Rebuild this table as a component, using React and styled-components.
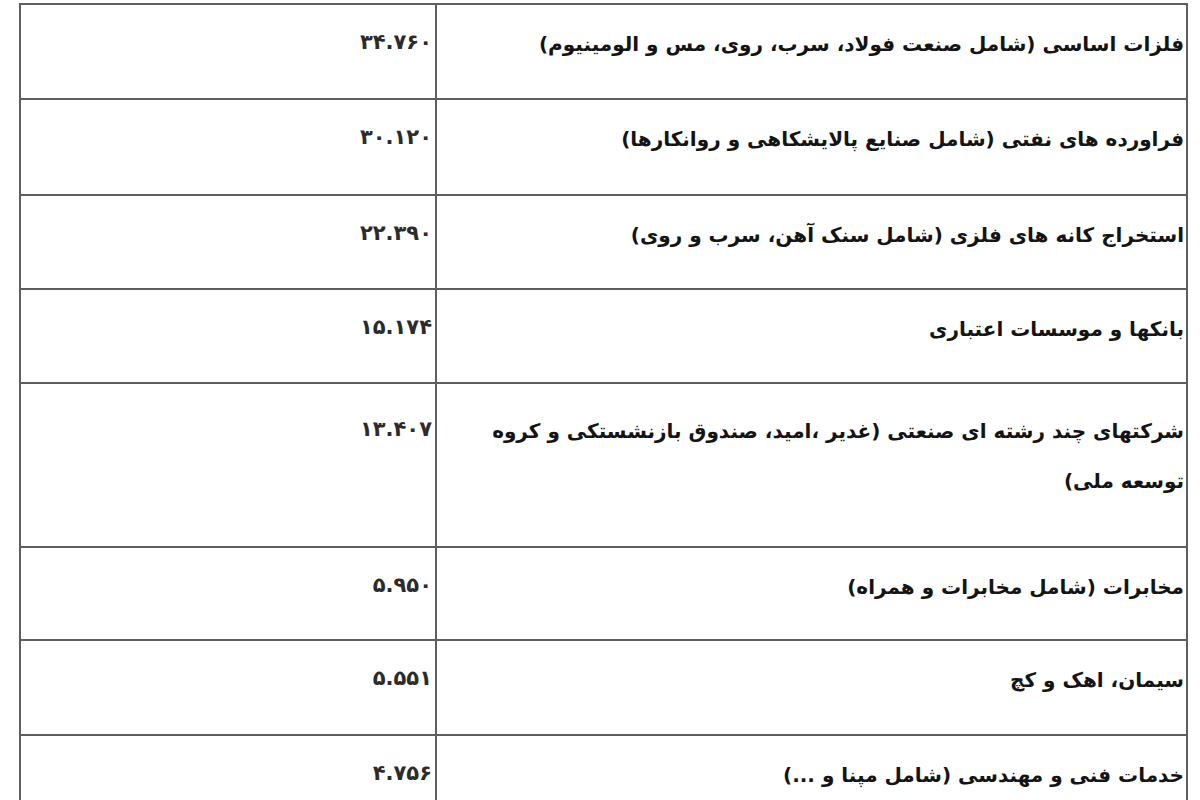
import React from 'react';
import styled, { createGlobalStyle } from 'styled-components';

const GlobalStyle = createGlobalStyle`
  html, body {
    margin: 0;
    padding: 0;
    background: #fff;
  }
`;

const Page = styled.div`
  width: 1200px;
  height: 800px;
  overflow: hidden;
  padding: 3px 0 0 19px;
  box-sizing: border-box;
`;

const Table = styled.div`
  width: 1169px;
  direction: rtl;
  border: 2px solid #5e5e5e;
  border-bottom: none;
  box-sizing: border-box;
  font-family: "DejaVu Sans", "Noto Sans", sans-serif;
`;

const Row = styled.div`
  display: grid;
  grid-template-columns: 751px 414px;
  height: ${(p) => p.$h}px;
  border-bottom: 2px solid #5e5e5e;
  box-sizing: border-box;
`;

const LabelCell = styled.div`
  border-left: 2px solid #5e5e5e;
  padding: ${(p) => p.$top}px 2px 0 0;
  font-size: 20px;
  line-height: 50px;
  font-weight: bold;
  color: #141414;
  text-align: right;
`;

const ValueCell = styled.div`
  padding: ${(p) => p.$top - 2}px 3px 0 0;
  font-size: 21px;
  line-height: 50px;
  font-weight: bold;
  letter-spacing: 1px;
  color: #2b2b2b;
  text-align: right;
`;

const rows = [
  { label: 'فلزات اساسی (شامل صنعت فولاد، سرب، روی، مس و الومینیوم)', value: '۳۴.۷۶۰', h: 95 },
  { label: 'فراورده های نفتی (شامل صنایع پالایشکاهی و روانکارها)', value: '۳۰.۱۲۰', h: 96 },
  { label: 'استخراج کانه های فلزی (شامل سنک آهن، سرب و روی)', value: '۲۲.۳۹۰', h: 94 },
  { label: 'بانکها و موسسات اعتباری', value: '۱۵.۱۷۴', h: 94 },
  {
    label: 'شرکتهای چند رشته ای صنعتی (غدیر ،امید، صندوق بازنشستکی و کروه توسعه ملی)',
    value: '۱۳.۴۰۷',
    h: 164,
    top: 22,
  },
  { label: 'مخابرات (شامل مخابرات و همراه)', value: '۵.۹۵۰', h: 93 },
  { label: 'سیمان، اهک و کچ', value: '۵.۵۵۱', h: 95 },
  { label: 'خدمات فنی و مهندسی (شامل مپنا و ...)', value: '۴.۷۵۶', h: 95 },
];

const App = () => (
  <Page>
    <GlobalStyle />
    <Table>
      {rows.map((r) => (
        <Row key={r.value} $h={r.h}>
          <LabelCell $top={r.top || 14}>{r.label}</LabelCell>
          <ValueCell $top={r.top || 14}>{r.value}</ValueCell>
        </Row>
      ))}
    </Table>
  </Page>
);

export default App;
